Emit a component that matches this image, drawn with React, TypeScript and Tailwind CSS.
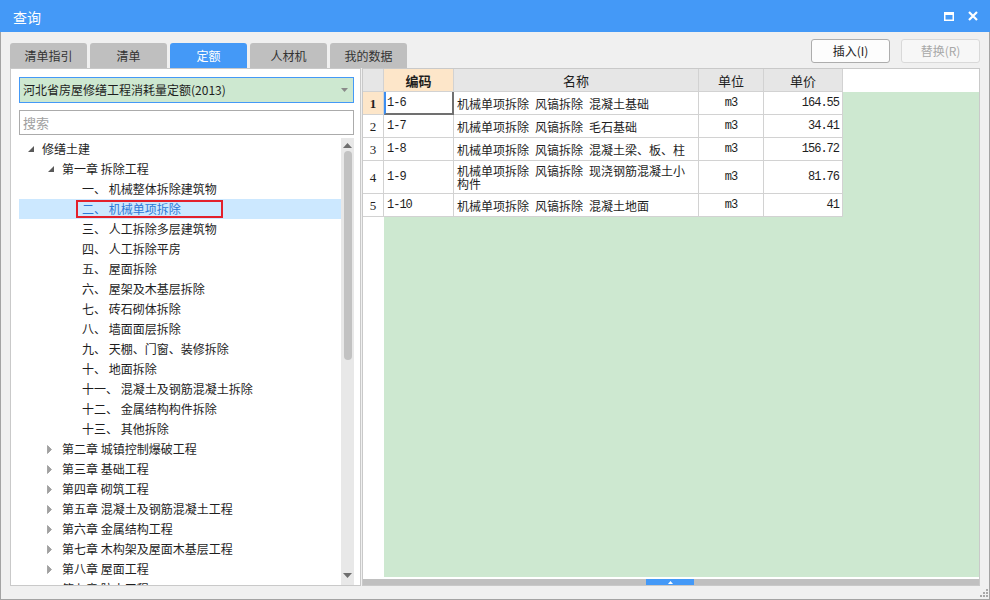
import React from "react";

const tabs = ["清单指引", "清单", "定额", "人材机", "我的数据"];

type Node = { level: 0 | 1 | 2; text: string; state?: "open" | "closed"; sel?: boolean };

const tree: Node[] = [
  { level: 0, text: "修缮土建", state: "open" },
  { level: 1, text: "第一章 拆除工程", state: "open" },
  { level: 2, text: "一、 机械整体拆除建筑物" },
  { level: 2, text: "二、 机械单项拆除", sel: true },
  { level: 2, text: "三、 人工拆除多层建筑物" },
  { level: 2, text: "四、 人工拆除平房" },
  { level: 2, text: "五、 屋面拆除" },
  { level: 2, text: "六、 屋架及木基层拆除" },
  { level: 2, text: "七、 砖石砌体拆除" },
  { level: 2, text: "八、 墙面面层拆除" },
  { level: 2, text: "九、 天棚、门窗、装修拆除" },
  { level: 2, text: "十、 地面拆除" },
  { level: 2, text: "十一、 混凝土及钢筋混凝土拆除" },
  { level: 2, text: "十二、 金属结构构件拆除" },
  { level: 2, text: "十三、 其他拆除" },
  { level: 1, text: "第二章 城镇控制爆破工程", state: "closed" },
  { level: 1, text: "第三章 基础工程", state: "closed" },
  { level: 1, text: "第四章 砌筑工程", state: "closed" },
  { level: 1, text: "第五章 混凝土及钢筋混凝土工程", state: "closed" },
  { level: 1, text: "第六章 金属结构工程", state: "closed" },
  { level: 1, text: "第七章 木构架及屋面木基层工程", state: "closed" },
  { level: 1, text: "第八章 屋面工程", state: "closed" },
  { level: 1, text: "第九章 防水工程", state: "closed" },
];

const rows = [
  { n: "1", code: "1-6", name: "机械单项拆除\u2002风镐拆除\u2002混凝土基础", unit: "m3", price: "164.55", h: "h-[23px]" },
  { n: "2", code: "1-7", name: "机械单项拆除\u2002风镐拆除\u2002毛石基础", unit: "m3", price: "34.41", h: "h-[23px]" },
  { n: "3", code: "1-8", name: "机械单项拆除\u2002风镐拆除\u2002混凝土梁、板、柱", unit: "m3", price: "156.72", h: "h-[23px]" },
  { n: "4", code: "1-9", name: "机械单项拆除\u2002风镐拆除\u2002现浇钢筋混凝土小构件", unit: "m3", price: "81.76", h: "h-[33px]" },
  { n: "5", code: "1-10", name: "机械单项拆除\u2002风镐拆除\u2002混凝土地面", unit: "m3", price: "41", h: "h-[23px]" },
];

function OpenTri() {
  return (
    <svg width="6" height="6" viewBox="0 0 6 6">
      <polygon points="6,0 6,6 0,6" fill="#595959" />
    </svg>
  );
}
function ClosedTri() {
  return (
    <svg width="5" height="9" viewBox="0 0 5 9">
      <polygon points="0.5,0.5 4.5,4.5 0.5,8.5" fill="#a0a0a0" stroke="#8a8a8a" strokeWidth="0.6" />
    </svg>
  );
}

function TreeRow({ node }: { node: Node }) {
  if (node.level === 2) {
    if (node.sel) {
      return (
        <div className="h-[20px] flex items-center bg-[#cce8ff] pl-[57px]">
          <span className="h-[18px] w-[147px] border-2 border-[#e3202b] pl-[4px] flex items-center text-[#2d78d6] whitespace-pre">
            {node.text}
          </span>
        </div>
      );
    }
    return (
      <div className="h-[20px] flex items-center pl-[63px] whitespace-pre">{node.text}</div>
    );
  }
  return (
    <div className={"h-[20px] flex items-center whitespace-pre " + (node.level === 0 ? "pl-[6px]" : "pl-[26px]")}>
      <div className={"w-[17px] h-[20px] flex items-center " + (node.state === "open" ? "pl-[3px]" : "pl-[2px]")}>
        {node.state === "open" ? <OpenTri /> : <ClosedTri />}
      </div>
      <span>{node.text}</span>
    </div>
  );
}

export default function App() {
  return (
    <div className="w-[990px] h-[600px] flex flex-col bg-[#f0f0f0] font-['Noto_Sans_CJK_SC',sans-serif] text-[12px] text-[#1e1e1e] overflow-hidden leading-none">
      {/* Title bar */}
      <div className="h-[32px] shrink-0 bg-[#4499f7] flex items-center justify-between pl-[13px] pr-[12px] text-white text-[14px]">
        <span className="mt-[1px]">查询</span>
        <div className="flex items-center gap-[14px]">
          <svg width="10" height="9" viewBox="0 0 10 9">
            <rect x="0" y="0" width="10" height="3" fill="white" />
            <rect x="0.75" y="0.75" width="8.5" height="7.5" fill="none" stroke="white" strokeWidth="1.5" />
          </svg>
          <svg width="10" height="10" viewBox="0 0 10 10">
            <path d="M1 1 L9 9 M9 1 L1 9" stroke="white" strokeWidth="2.2" />
          </svg>
        </div>
      </div>

      {/* Body */}
      <div className="flex-1 flex flex-col border-x border-b border-[#a3a3a3] px-[9px] min-h-0">
        {/* tabs + buttons */}
        <div className="h-[36px] shrink-0 flex justify-between">
          <div className="flex gap-[3px] self-end">
            {tabs.map((t) => (
              <div
                key={t}
                className={
                  "w-[77px] h-[25px] rounded-t-[3px] flex items-center justify-center " +
                  (t === "定额" ? "bg-[#4499f7] text-white" : "bg-[#bfbfbf] text-[#333]")
                }
              >
                {t}
              </div>
            ))}
          </div>
          <div className="flex gap-[11px] mt-[7px]">
            <div className="w-[79px] h-[24px] rounded-[3px] border border-[#adadad] bg-[#fdfdfd] flex items-center justify-center text-[#222]">
              插入(I)
            </div>
            <div className="w-[79px] h-[24px] rounded-[3px] border border-[#d9d9d9] bg-[#f7f7f7] flex items-center justify-center text-[#a8a8a8]">
              替换(R)
            </div>
          </div>
        </div>

        {/* content */}
        <div className="h-[518px] shrink-0 flex gap-[1px]">
          {/* left panel */}
          <div className="w-[351px] border border-[#c9c9c9] bg-white pt-[8px] pl-[8px] pr-[6px] flex flex-col min-h-0">
            <div className="h-[26px] shrink-0 border border-[#4499f7] bg-[#cde8d0] flex items-center justify-between pl-[3px] pr-[5px]">
              <span>河北省房屋修缮工程消耗量定额(2013)</span>
              <svg width="7" height="4" viewBox="0 0 7 4">
                <polygon points="0,0 7,0 3.5,4" fill="#8a8a8a" />
              </svg>
            </div>
            <div className="h-[25px] shrink-0 mt-[7px] border border-[#ababab] flex items-center pl-[3px] text-[#a0a0a0] text-[13px]">
              搜索
            </div>
            <div className="mt-[3px] flex-1 flex min-h-0">
              <div className="flex-1 overflow-hidden pt-[1px]">
                {tree.map((n, i) => (
                  <TreeRow key={i} node={n} />
                ))}
              </div>
              <div className="w-[13px] bg-[#e8e8e8] flex flex-col items-center">
                <div className="h-[10px] flex items-end">
                  <svg width="9" height="5" viewBox="0 0 9 5">
                    <polygon points="0,5 9,5 4.5,0" fill="#6e6e6e" />
                  </svg>
                </div>
                <div className="mt-[3px] w-[8px] h-[209px] rounded-full bg-[#c2c2c2]" />
                <div className="flex-1" />
                <div className="h-[12px] flex items-start">
                  <svg width="9" height="5" viewBox="0 0 9 5">
                    <polygon points="0,0 9,0 4.5,5" fill="#6e6e6e" />
                  </svg>
                </div>
              </div>
            </div>
          </div>

          {/* right grid */}
          <div className="w-[618px] border border-[#c9c9c9] bg-white flex flex-col min-h-0">
            <div className="h-[23px] shrink-0 flex">
              <div className="w-[21px] border-r border-b border-[#d2d2d2] bg-[#e6e6e6]" />
              <div className="w-[70px] border-r border-b border-[#d2d2d2] bg-[#fde6c9] flex items-center justify-center font-bold text-[13px]">
                编码
              </div>
              <div className="w-[245px] border-r border-b border-[#d2d2d2] bg-[#e6e6e6] flex items-center justify-center text-[13px]">
                名称
              </div>
              <div className="w-[65px] border-r border-b border-[#d2d2d2] bg-[#e6e6e6] flex items-center justify-center text-[13px]">
                单位
              </div>
              <div className="w-[79px] border-r border-b border-[#d2d2d2] bg-[#e6e6e6] flex items-center justify-center text-[13px]">
                单价
              </div>
              <div className="flex-1 bg-white" />
            </div>
            {rows.map((r, i) => (
              <div key={r.n} className={"shrink-0 flex " + r.h}>
                <div
                  className={
                    "w-[21px] border-r border-b border-[#d2d2d2] flex items-center justify-center font-['Liberation_Serif',serif] text-[13px] " +
                    (i === 0 ? "bg-[#fde6c9] font-bold" : "bg-white")
                  }
                >
                  {r.n}
                </div>
                {i === 0 ? (
                  <div className="w-[70px] border-l-2 border-l-[#3d8ef0] border-r-2 border-r-[#707070] border-b-2 border-b-[#707070] bg-white flex items-center pl-[1px] font-['Liberation_Mono',monospace] text-[12px] tracking-[-1px]">
                    {r.code}
                  </div>
                ) : (
                  <div className="w-[70px] border-r border-b border-[#d2d2d2] bg-white flex items-center pl-[3px] font-['Liberation_Mono',monospace] text-[12px] tracking-[-1px]">
                    {r.code}
                  </div>
                )}
                <div className="w-[245px] border-r border-b border-[#d2d2d2] bg-white flex items-center pl-[3px] pr-[3px] leading-[13px]">
                  <span>{r.name}</span>
                </div>
                <div className="w-[65px] border-r border-b border-[#d2d2d2] bg-white flex items-center justify-center font-['Liberation_Mono',monospace] text-[12px] tracking-[-1px]">
                  {r.unit}
                </div>
                <div className="w-[79px] border-r border-b border-[#d2d2d2] bg-white flex items-center justify-end pr-[3px] font-['Liberation_Mono',monospace] text-[12px] tracking-[-1px]">
                  {r.price}
                </div>
                <div className="flex-1 bg-[#cde8d0]" />
              </div>
            ))}
            <div className="flex-1 flex min-h-0">
              <div className="w-[21px] bg-white" />
              <div className="flex-1 bg-[#cde8d0]" />
            </div>
            <div className="h-[2px] shrink-0 bg-white" />
            <div className="h-[6px] shrink-0 bg-[#c0c0c0] flex">
              <div className="ml-[283px] w-[48px] h-[6px] bg-[#4499f7] flex items-center justify-center">
                <svg width="5" height="3" viewBox="0 0 5 3">
                  <polygon points="0,3 5,3 2.5,0" fill="white" />
                </svg>
              </div>
            </div>
          </div>
        </div>

        {/* bottom with grip */}
        <div className="flex-1 flex justify-end items-end -mr-[8px] pb-[2px]">
          <svg width="8" height="8" viewBox="0 0 8 8">
            <rect x="6" y="0" width="2" height="2" fill="#a8a8a8" />
            <rect x="3" y="3" width="2" height="2" fill="#a8a8a8" />
            <rect x="6" y="3" width="2" height="2" fill="#a8a8a8" />
            <rect x="0" y="6" width="2" height="2" fill="#a8a8a8" />
            <rect x="3" y="6" width="2" height="2" fill="#a8a8a8" />
            <rect x="6" y="6" width="2" height="2" fill="#a8a8a8" />
          </svg>
        </div>
      </div>
    </div>
  );
}
